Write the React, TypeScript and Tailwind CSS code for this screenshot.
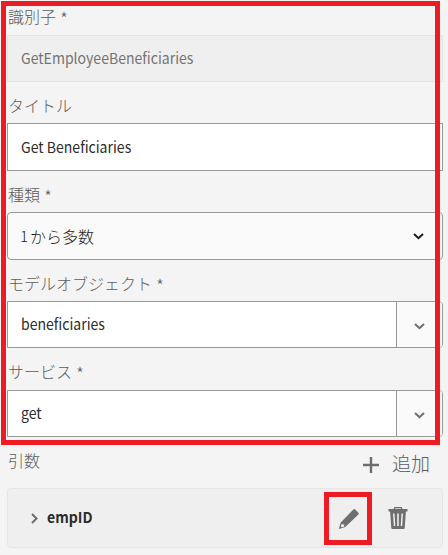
import type { ReactNode } from "react";

function Label({ children, required, className = "" }: { children: ReactNode; required?: boolean; className?: string }) {
  return (
    <div className={`flex items-center whitespace-nowrap pl-px text-[16px] font-light leading-[24px] text-[#5c5c5c] ${className}`}>
      {children}
      {required && <span className="ml-[4px] pt-[4px] text-[18px] font-light">*</span>}
    </div>
  );
}

function Latin({ children, className = "" }: { children: ReactNode; className?: string }) {
  return <span className={`inline-block origin-left scale-x-[0.937] ${className}`}>{children}</span>;
}

function Chevron({ className = "" }: { className?: string }) {
  return (
    <svg width="11" height="7" viewBox="0 0 11 7" fill="none" stroke="currentColor" strokeWidth="2" className={className}>
      <path d="M1 1l4.5 4.2L10 1" />
    </svg>
  );
}

function ComboBox({ value }: { value: string }) {
  return (
    <div className="flex h-[47px] rounded-r-[4px] border border-[#999] bg-white">
      <div className="flex flex-1 items-center pl-[13px] text-[#2c2c2c]">
        <Latin>{value}</Latin>
      </div>
      <div className="flex w-[46px] items-center border-l border-[#999] bg-[#fafafa] pl-[17px] pt-[4px] text-[#6e6e6e] rounded-r-[3px]">
        <Chevron />
      </div>
    </div>
  );
}

export default function App() {
  return (
    <div className="relative h-[555px] w-[448px] overflow-hidden bg-[#f4f4f4] pl-[7px] pr-[5px] font-['Noto_Sans_CJK_JP',sans-serif] text-[15px]">
      <Label required className="h-[35px] pb-[3px]">識別子</Label>
      <div className="flex h-[47px] items-center border border-[#e4e4e4] bg-[#efefef] pl-[13px] text-[#747474]">
        <Latin>GetEmployeeBeneficiaries</Latin>
      </div>
      <Label className="h-[41px] pt-[4px]">タイトル</Label>
      <div className="flex h-[48px] items-center border border-[#999] bg-white pl-[13px] text-[#2c2c2c]">
        <Latin>Get Beneficiaries</Latin>
      </div>
      <Label required className="h-[41px] pt-[4px]">種類</Label>
      <div className="flex h-[48px] items-center justify-between rounded-[4px] border border-[#999] bg-[#fafafa] pl-[12px] pr-[18px] text-[16px] font-light text-[#1c1c1c]">
        <span className="flex items-center gap-[3px]">
          <span className="w-[7px] text-[15px]">1</span>
          <span>から多数</span>
        </span>
        <Chevron />
      </div>
      <Label required className="h-[41px] pt-[4px]">モデルオブジェクト</Label>
      <ComboBox value="beneficiaries" />
      <Label required className="h-[42px] pt-[4px]">サービス</Label>
      <ComboBox value="get" />
      <div className="flex h-[51px] items-start justify-between pr-[13px] text-[#5c5c5c]">
        <Label className="pt-[11px]">引数</Label>
        <div className="flex items-center pt-[12px] text-[19px] font-light leading-[28px]">
          <svg width="16" height="16" viewBox="0 0 16 16" className="mr-[13px] mt-[4px]" fill="#6e6e6e">
            <path d="M6.8 0h2.4v6.8H16v2.4H9.2V16H6.8V9.2H0V6.8h6.8z" />
          </svg>
          追加
        </div>
      </div>
      <div className="flex h-[60px] items-center rounded-[4px] border border-[#e6e6e6] bg-[#efefef] text-[#6e6e6e]">
        <svg width="7" height="11" viewBox="0 0 7 11" fill="none" stroke="currentColor" strokeWidth="2" className="ml-[23px] mt-px">
          <path d="M1 1l4.5 4.5L1 10" />
        </svg>
        <Latin className="ml-[9px] -mt-[2px] font-bold text-[#2c2c2c]">empID</Latin>
        <div className="ml-auto flex items-center pr-[34px]">
          <svg width="22" height="22" viewBox="0 0 22 22" className="mr-[28px] mt-[2px]" fill="#6e6e6e">
            <path fillRule="evenodd" d="M15.4 1.5q.9-.8 1.8 0l3.2 3.2q.8.9 0 1.8L7.3 18.9.8 20.9l1.9-6.4zM3.7 15.8l-.9 2.6 1 .8 2.6-.8-.4-1.8-1.8-.4z" />
          </svg>
          <svg width="20" height="22" viewBox="0 0 20 22" fill="#6e6e6e">
            <path fillRule="evenodd" d="M5.8 2V1.2Q5.8 0 7 0h6q1.2 0 1.2 1.2V2h5.3v2.4h-1.6L16.7 21q-.1 1-1 1H4.3q-.9 0-1-1L2.1 4.4H.5V2zM7.2 2h5.6V1.2H7.2zM5 6.5l.8 12.5h1.5L6.5 6.5zM9.2 6.5V19h1.6V6.5zM13.5 6.5 12.7 19h1.5L15 6.5z" />
          </svg>
        </div>
      </div>
      <div className="pointer-events-none absolute left-[1px] top-[1px] h-[444px] w-[439px] border-[5px] border-[#ed1c24]" />
      <div className="pointer-events-none absolute left-[324px] top-[492px] h-[53px] w-[48px] border-[5px] border-[#ed1c24]" />
    </div>
  );
}
